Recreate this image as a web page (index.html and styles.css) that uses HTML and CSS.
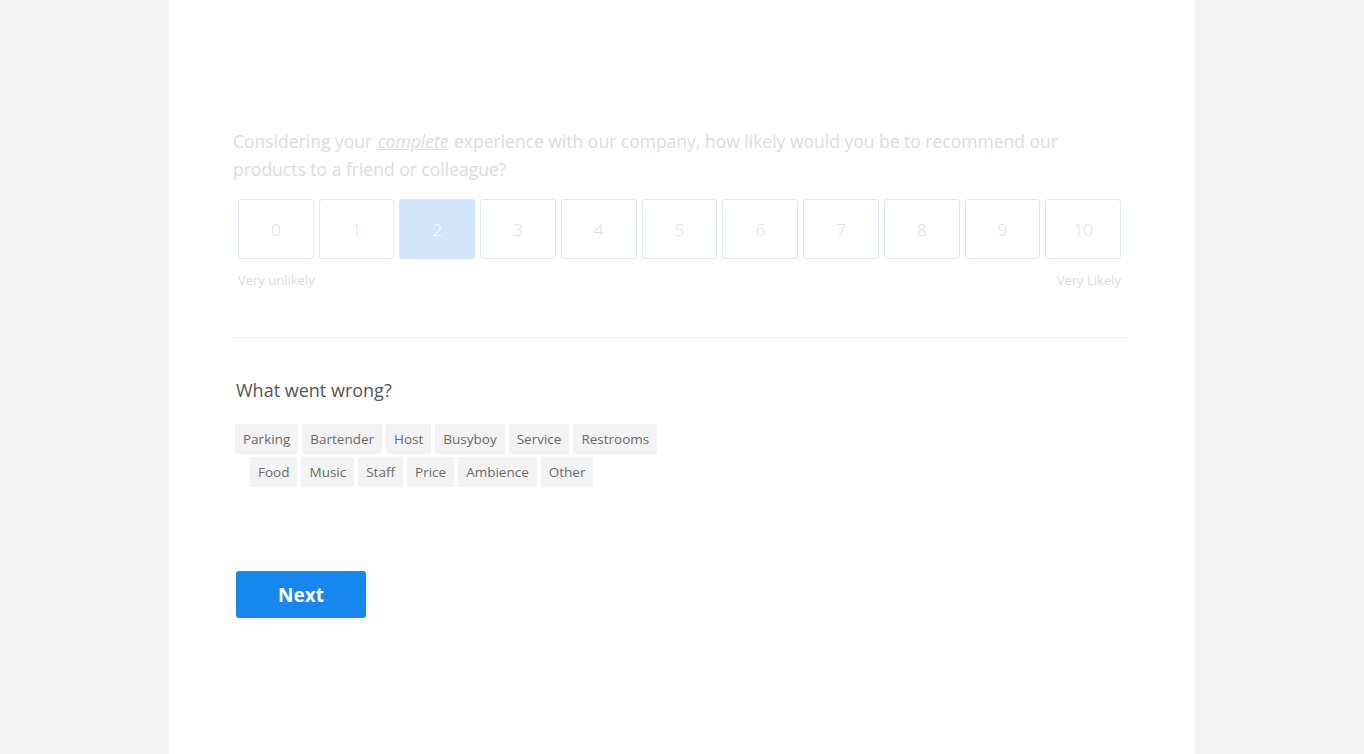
FILE: index.html
```html
<!DOCTYPE html>
<html lang="en">
<head>
<meta charset="utf-8">
<title>Survey</title>
<link rel="stylesheet" href="styles.css">
</head>
<body>
<div class="panel">
  <div class="content">
    <p class="question">Considering your <span class="em">complete</span> experience with our company, how likely would you be to recommend our products to a friend or colleague?</p>
    <div class="scale">
      <div class="box">0</div>
      <div class="box">1</div>
      <div class="box selected">2</div>
      <div class="box">3</div>
      <div class="box">4</div>
      <div class="box">5</div>
      <div class="box">6</div>
      <div class="box">7</div>
      <div class="box">8</div>
      <div class="box">9</div>
      <div class="box">10</div>
    </div>
    <div class="scale-labels">
      <span>Very unlikely</span>
      <span>Very Likely</span>
    </div>
    <hr class="divider">
    <h2 class="subq">What went wrong?</h2>
    <div class="tags">
      <div class="tag-row">
        <span class="tag">Parking</span>
        <span class="tag">Bartender</span>
        <span class="tag">Host</span>
        <span class="tag">Busyboy</span>
        <span class="tag">Service</span>
        <span class="tag">Restrooms</span>
      </div>
      <div class="tag-row indent">
        <span class="tag">Food</span>
        <span class="tag">Music</span>
        <span class="tag">Staff</span>
        <span class="tag">Price</span>
        <span class="tag">Ambience</span>
        <span class="tag">Other</span>
      </div>
    </div>
    <button class="next">Next</button>
  </div>
</div>
</body>
</html>
```

FILE: styles.css
```css
html, body {
  margin: 0;
  padding: 0;
  background: #f4f4f4;
  height: 100%;
}
body {
  font-family: "Open Sans", "Noto Sans", sans-serif;
}
.panel {
  margin-left: 169px;
  width: 1026px;
  min-height: 754px;
  background: #ffffff;
  box-sizing: border-box;
  padding: 127px 0 0 64px;
}
.content {
  width: 894px;
}
.question {
  margin: 0;
  font-size: 17.5px;
  line-height: 28px;
  color: #dcdcdc;
  width: 860px;
}
.em {
  font-style: italic;
  text-decoration: underline;
  text-decoration-color: #e2e2e2;
  padding: 0 1px;
}
.scale {
  display: flex;
  gap: 5px;
  margin: 16px 0 0 5px;
  width: 883px;
}
.box {
  flex: 1;
  height: 60px;
  box-sizing: border-box;
  border: 1px solid #dbe9f8;
  border-radius: 3px;
  display: flex;
  align-items: center;
  justify-content: center;
  font-size: 17px;
  color: #dddddd;
  font-weight: 300;
}
.box.selected {
  background: #d1e6fb;
  border-color: #d1e6fb;
  color: #ffffff;
}
.scale-labels {
  display: flex;
  justify-content: space-between;
  width: 883px;
  margin: 12px 0 0 5px;
  font-size: 13px;
  line-height: 18px;
  color: #dcdcdc;
}
.divider {
  border: 0;
  border-top: 1px solid #eeeeee;
  margin: 48px 0 0 0;
  width: 894px;
}
.subq {
  margin: 39px 0 0 3px;
  font-size: 18px;
  line-height: 26px;
  font-weight: 400;
  color: #555555;
}
.tags {
  margin: 21px 0 0 2px;
  display: flex;
  flex-direction: column;
  gap: 3px;
}
.tag-row {
  display: flex;
  gap: 4px;
}
.tag-row.indent {
  padding-left: 15px;
}
.tag {
  background: #f3f3f3;
  color: #6a6a6a;
  font-size: 13.5px;
  height: 30px;
  line-height: 30px;
  padding: 0 8px;
  border-radius: 2px;
}
.next {
  display: block;
  margin: 84px 0 0 3px;
  width: 130px;
  height: 47px;
  border: 0;
  border-radius: 3px;
  background: #1787ee;
  color: #ffffff;
  font-family: "Open Sans", "Noto Sans", sans-serif;
  font-size: 19px;
  font-weight: 700;
  cursor: pointer;
}
```
